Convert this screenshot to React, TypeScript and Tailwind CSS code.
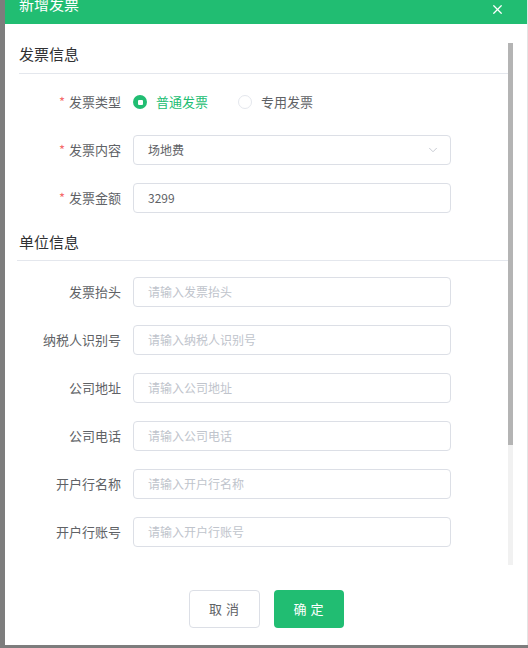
import { X, ChevronDown } from "lucide-react";

const font = { fontFamily: '"Noto Sans CJK SC", "Noto Sans", sans-serif' };

const Label = ({ text, required }: { text: string; required?: boolean }) => (
  <div className="w-[114px] pr-[12px] text-right text-[13px] text-[#606266] leading-[30px] shrink-0">
    {required && <span className="text-[#f56c6c] mr-[4px]">*</span>}
    {text}
  </div>
);

const TextRow = ({ label, placeholder, value, required }: { label: string; placeholder?: string; value?: string; required?: boolean }) => (
  <div className="flex items-center h-[30px]">
    <Label text={label} required={required} />
    <div className="w-[318px] h-[30px] border border-[#dcdfe6] rounded-[4px] px-[14px] flex items-center text-[12px]">
      {value ? <span className="text-[#606266]">{value}</span> : <span className="text-[#c0c4cc]">{placeholder}</span>}
    </div>
  </div>
);

const App = () => {
  return (
    <div className="w-[528px] h-[648px] flex bg-[#7d7d7d] overflow-hidden" style={font}>
      <div className="w-[5px] shrink-0" />
      <div className="flex-1 flex flex-col">
        {/* Dialog */}
        <div className="relative flex-1 flex flex-col bg-white border-r border-[#e4e4e4] overflow-hidden">
          <div className="h-[24px] bg-[#21bd72] flex items-end justify-between px-[14px] shrink-0 overflow-hidden">
            <span className="text-white text-[15px] leading-[20px] mb-[10px]">新增发票</span>
            <X className="w-[15px] h-[15px] text-white mb-[7px] mr-[8px]" strokeWidth={2} />
          </div>

          <div className="h-[543px] pl-[14px] pr-[19px] pt-[20px] shrink-0">
            <div className="text-[15px] leading-[20px] text-[#303133] pb-[9px] border-b border-[#e4e7ed]">发票信息</div>

            <div className="flex flex-col gap-[18px] mt-[13px]">
              <div className="flex items-center h-[30px]">
                <Label text="发票类型" required />
                <div className="flex items-center text-[13px]">
                  <span className="w-[14px] h-[14px] rounded-full bg-[#21bd72] flex items-center justify-center">
                    <span className="w-[5px] h-[5px] rounded-[1px] bg-white" />
                  </span>
                  <span className="ml-[9px] text-[#21bd72]">普通发票</span>
                  <span className="ml-[30px] w-[14px] h-[14px] rounded-full border border-[#e4e7ed]" />
                  <span className="ml-[9px] text-[#606266]">专用发票</span>
                </div>
              </div>

              <div className="flex items-center h-[30px]">
                <Label text="发票内容" required />
                <div className="w-[318px] h-[30px] border border-[#dcdfe6] rounded-[4px] pl-[14px] pr-[10px] flex items-center justify-between text-[12px] text-[#606266]">
                  <span>场地费</span>
                  <ChevronDown className="w-[14px] h-[14px] text-[#c0c4cc]" strokeWidth={1.5} />
                </div>
              </div>

              <TextRow label="发票金额" value="3299" required />
            </div>

            <div className="text-[15px] leading-[20px] text-[#303133] pb-[8px] border-b border-[#e4e7ed] mt-[19px] -ml-[2px] pl-[2px]">单位信息</div>

            <div className="flex flex-col gap-[18px] mt-[16px]">
              <TextRow label="发票抬头" placeholder="请输入发票抬头" />
              <TextRow label="纳税人识别号" placeholder="请输入纳税人识别号" />
              <TextRow label="公司地址" placeholder="请输入公司地址" />
              <TextRow label="公司电话" placeholder="请输入公司电话" />
              <TextRow label="开户行名称" placeholder="请输入开户行名称" />
              <TextRow label="开户行账号" placeholder="请输入开户行账号" />
            </div>
          </div>

          {/* scrollbar */}
          <div className="absolute left-[503px] top-[43px] w-[5px] h-[522px] bg-[#f1f1f1]">
            <div className="w-[5px] h-[402px] bg-[#b4b4b4]" />
          </div>

          <div className="flex justify-center gap-[14px] pt-[23px]">
            <button className="w-[71px] h-[38px] border border-[#dcdfe6] rounded-[4px] bg-white text-[13px] text-[#606266] tracking-[4px] pl-[4px]">取消</button>
            <button className="w-[70px] h-[38px] rounded-[4px] bg-[#21bd72] text-[13px] text-white tracking-[4px] pl-[4px]">确定</button>
          </div>
        </div>
        <div className="h-[3px] shrink-0" />
      </div>
    </div>
  );
};

export default App;
